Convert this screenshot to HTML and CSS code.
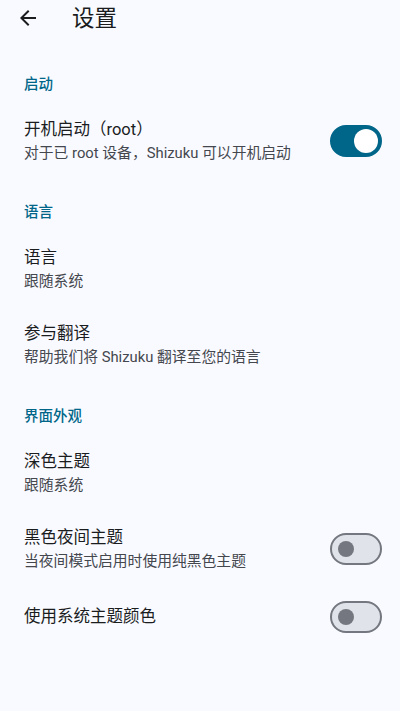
FILE: index.html
```html
<!DOCTYPE html>
<html lang="zh-CN">

<head>
  <meta charset="UTF-8">
  <meta name="viewport" content="width=device-width, initial-scale=1.0">
  <title>设置</title>
  <link rel="stylesheet" href="styles.css">
</head>

<body>
  <div class="app-bar">
    <svg class="back" viewBox="0 0 24 24" width="24" height="24">
      <path d="M20 11H7.83l5.59-5.59L12 4l-8 8 8 8 1.41-1.41L7.83 13H20v-2z"></path>
    </svg>
    <h1 class="title">设置</h1>
  </div>

  <div class="list">
    <div class="category">启动</div>
    <div class="pref">
      <div class="text">
        <div class="pref-title">开机启动（root）</div>
        <div class="pref-summary">对于已 root 设备，Shizuku 可以开机启动</div>
      </div>
      <div class="switch on"><span class="thumb"></span></div>
    </div>

    <div class="category">语言</div>
    <div class="pref">
      <div class="text">
        <div class="pref-title">语言</div>
        <div class="pref-summary">跟随系统</div>
      </div>
    </div>
    <div class="pref">
      <div class="text">
        <div class="pref-title">参与翻译</div>
        <div class="pref-summary">帮助我们将 Shizuku 翻译至您的语言</div>
      </div>
    </div>

    <div class="category">界面外观</div>
    <div class="pref">
      <div class="text">
        <div class="pref-title">深色主题</div>
        <div class="pref-summary">跟随系统</div>
      </div>
    </div>
    <div class="pref">
      <div class="text">
        <div class="pref-title">黑色夜间主题</div>
        <div class="pref-summary">当夜间模式启用时使用纯黑色主题</div>
      </div>
      <div class="switch"><span class="thumb"></span></div>
    </div>
    <div class="pref single">
      <div class="text">
        <div class="pref-title">使用系统主题颜色</div>
      </div>
      <div class="switch"><span class="thumb"></span></div>
    </div>
  </div>
</body>

</html>
```

FILE: styles.css
```css
body {
  margin: 0;
  background-color: #f9faff;
  font-family: Roboto, "Noto Sans CJK SC", sans-serif;
  color: #1a1c1e;
}

.app-bar {
  display: flex;
  align-items: center;
  height: 36px;
  padding-left: 16px;
}

.back {
  fill: #1a1c1e;
  flex: none;
}

.title {
  margin: 0 0 0 32px;
  font-size: 22.5px;
  font-weight: 400;
  line-height: 28px;
}

.list {
  padding-top: 15px;
}

.category {
  margin: 24px 0 8px;
  padding-left: 24px;
  font-size: 14.5px;
  font-weight: 500;
  line-height: 20px;
  color: #006689;
}

.pref {
  display: flex;
  align-items: center;
  padding: 15px 18px 15px 24px;
}

.pref.single {
  padding-top: 14px;
  padding-bottom: 14px;
}

.text {
  flex: 1;
}

.pref-title {
  font-size: 16.5px;
  line-height: 24px;
}

.pref-summary {
  font-size: 14.8px;
  line-height: 22px;
  color: #44474e;
}

.switch {
  box-sizing: border-box;
  width: 52px;
  height: 32px;
  border-radius: 16px;
  border: 2px solid #74777f;
  background-color: #e0e3e9;
  display: flex;
  align-items: center;
  padding-left: 6px;
  flex: none;
}

.thumb {
  width: 16px;
  height: 16px;
  border-radius: 50%;
  background-color: #74777f;
}

.switch.on {
  border-color: #006689;
  background-color: #006689;
  justify-content: flex-end;
  padding: 0 2px 0 0;
}

.switch.on .thumb {
  width: 24px;
  height: 24px;
  background-color: #ffffff;
}
```
